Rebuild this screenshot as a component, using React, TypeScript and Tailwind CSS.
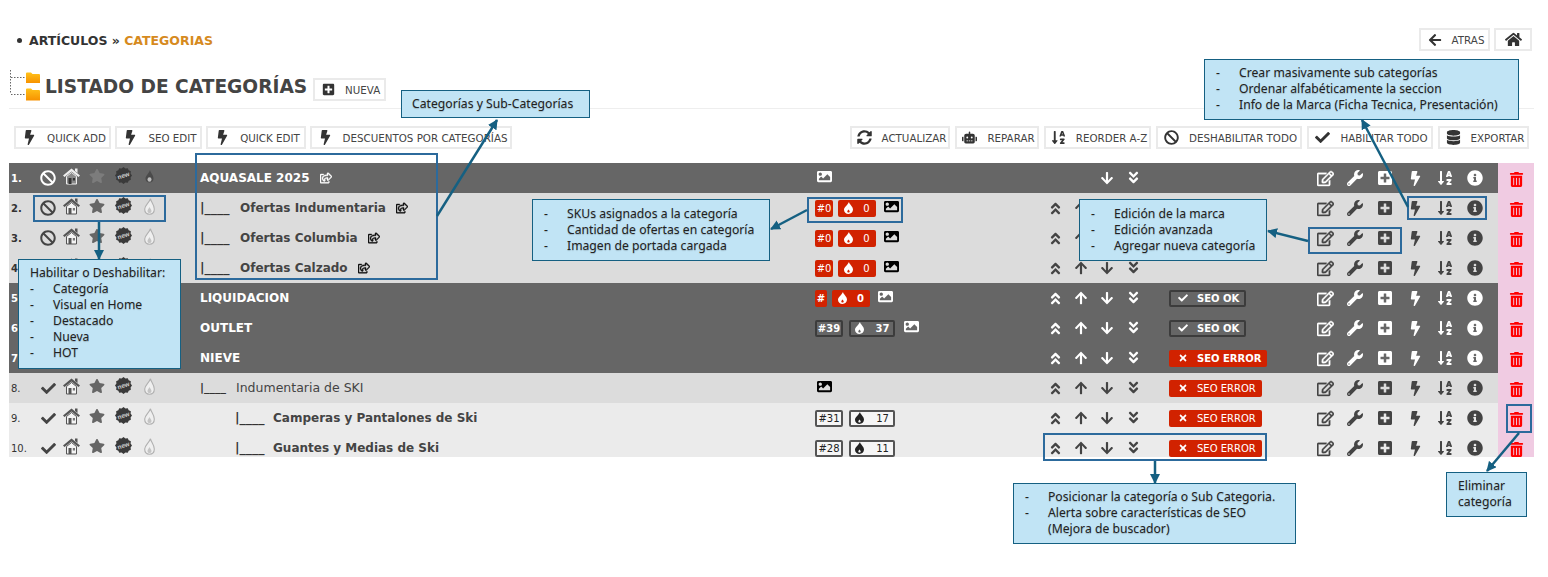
import type { ReactNode } from "react";
import {
    FaAngleDoubleDown, FaAngleDoubleUp, FaArrowDown, FaArrowLeft, FaArrowUp, FaBan, FaBolt, FaCheck,
    FaDatabase, FaHome, FaImage, FaInfoCircle, FaPlusSquare, FaRegEdit, FaRegShareSquare,
    FaRobot, FaSortAlphaDown, FaStar, FaSyncAlt, FaTimes, FaTrashAlt, FaWrench,
} from "react-icons/fa";

type Tone = "dark" | "mid" | "soft";

interface RowData {
    num: string;
    tone: Tone;
    status: "ban" | "check";
    name: string;
    level: 0 | 1 | 2;
    thin?: boolean;
    share?: boolean;
    sku?: string;
    hot?: string;
    skuWarn?: boolean;
    image?: boolean;
    noUp?: boolean;
    seo?: "ok" | "error";
}

const rows: RowData[] = [
    { num: "1.", tone: "dark", status: "ban", name: "AQUASALE 2025", level: 0, share: true, image: true, noUp: true },
    { num: "2.", tone: "mid", status: "ban", name: "Ofertas Indumentaria", level: 1, share: true, sku: "#0", hot: "0", skuWarn: true, image: true },
    { num: "3.", tone: "mid", status: "ban", name: "Ofertas Columbia", level: 1, share: true, sku: "#0", hot: "0", skuWarn: true, image: true },
    { num: "4.", tone: "mid", status: "ban", name: "Ofertas Calzado", level: 1, share: true, sku: "#0", hot: "0", skuWarn: true, image: true },
    { num: "5.", tone: "dark", status: "check", name: "LIQUIDACION", level: 0, sku: "#", hot: "0", skuWarn: true, image: true, seo: "ok" },
    { num: "6.", tone: "dark", status: "check", name: "OUTLET", level: 0, sku: "#39", hot: "37", image: true, seo: "ok" },
    { num: "7.", tone: "dark", status: "check", name: "NIEVE", level: 0, seo: "error" },
    { num: "8.", tone: "mid", status: "check", name: "Indumentaria de SKI", level: 1, thin: true, image: true, seo: "error" },
    { num: "9.", tone: "soft", status: "check", name: "Camperas y Pantalones de Ski", level: 2, sku: "#31", hot: "17", seo: "error" },
    { num: "10.", tone: "soft", status: "check", name: "Guantes y Medias de Ski", level: 2, sku: "#28", hot: "11", seo: "error" },
];

const burst = Array.from({ length: 24 }, (_, i) => {
    const r = i % 2 === 0 ? 8 : 6.9;
    const a = (i * Math.PI) / 12;
    return `${(8 + r * Math.cos(a)).toFixed(2)},${(8 + r * Math.sin(a)).toFixed(2)}`;
}).join(" ");

const HouseIcon = ({ dark }: { dark: boolean }) => {
    const c = dark ? "#ededed" : "#555555";
    return (
        <svg width="17" height="18" viewBox="0 0 17 18">
            <path d="M3.500 9.500 8.500 5.500 13.500 9.500V17h-10z" fill={dark ? "#8a8a8a" : "#f4f4f4"} stroke={c} strokeWidth="1" />
            <path d="M8.500 1.500 17 8.500 15.500 10 8.500 4.500 1.500 10 0 8.500z" fill={c} />
            <path d="M12 1.500h2.500v4.500L12 4z" fill={c} />
            <path d="M5.500 11h3v6h-3z" fill={dark ? "#333333" : "#555555"} />
            <path d="M9.800 11h2.200v2.500H9.800z" fill={dark ? "#333333" : "#777777"} />
        </svg>
    );
};

const NewIcon = () => (
    <svg width="17" height="17" viewBox="0 0 16 16">
        <polygon points={burst} fill="#3a3a3a" />
        <text x="8" y="10" textAnchor="middle" fontSize="6" fontWeight="700" fill="#cfcfcf" fontFamily="Liberation Sans, sans-serif" transform="rotate(-18 8 8)">new</text>
    </svg>
);

const FlameIcon = ({ dark }: { dark: boolean }) =>
    dark ? (
        <svg width="9" height="13" viewBox="0 0 9 13">
            <path d="M5 0C5.500 3 8.500 5 8.500 8.500 8.500 11 6.800 12.500 4.500 12.500 2.200 12.500.5 11 .5 8.500.5 6 3.500 4 5 0z" fill="#4a4a4a" />
            <ellipse cx="4.500" cy="9.500" rx="2" ry="2.300" fill="#bdbdbd" />
        </svg>
    ) : (
        <svg width="11" height="17" viewBox="0 0 11 17">
            <path d="M6.500.8C7 4 10.300 6.800 10.300 11 10.300 14.200 8.200 16.200 5.500 16.200 2.800 16.200.7 14.200.7 11 .7 7.500 5 5 6.500.8z" fill="#efefef" stroke="#b0b0b0" strokeWidth="1.100" />
            <path d="M5.500 9C6 10.500 7.500 11.500 7.500 13 7.500 14.400 6.600 15 5.500 15 4.400 15 3.500 14.400 3.500 13 3.500 11.500 5 10.500 5.500 9z" fill="#c4c4c4" />
        </svg>
    );

// flame inside the count badges, a solid drop with a small hole low down
const BadgeFlame = () => (
    <svg width="9" height="12" viewBox="0 0 9 12" className="shrink-0">
        <path
            fillRule="evenodd"
            fill="currentColor"
            d="M5 0C5.300 2.400 9 4.300 9 7.600 9 10.200 7 12 4.500 12 2 12 0 10.200 0 7.700 0 5.500 3.500 3 5 0zM4.500 7.500C4 8.300 3.300 8.700 3.300 9.500 3.300 10.200 3.800 10.600 4.500 10.600 5.200 10.600 5.700 10.200 5.700 9.500 5.700 8.700 5 8.300 4.500 7.500z"
        />
    </svg>
);

const FolderTree = () => (
    <svg width="31" height="31" viewBox="0 0 31 31" className="mt-[19px] shrink-0">
        <defs>
            <linearGradient id="folder" x1="0" y1="0" x2="0" y2="1">
                <stop offset="0" stopColor="#ffc21a" />
                <stop offset="1" stopColor="#f79200" />
            </linearGradient>
        </defs>
        <path d="M1.500 0v24M2 7.500h15M2 24.500h15" fill="none" stroke="#666666" strokeWidth="1" strokeDasharray="1.500 1.500" />
        <path d="M17 3.500a1 1 0 0 1 1-1h4l1.500 1.500H30a1 1 0 0 1 1 1V13H17z" fill="url(#folder)" />
        <path d="M17 19.500a1 1 0 0 1 1-1h4l1.500 1.500H30a1 1 0 0 1 1 1V30.500H17z" fill="url(#folder)" />
    </svg>
);

const ToolButton = ({ icon, label, width }: { icon: ReactNode; label: string; width: string }) => (
    <div className={`flex h-[23px] items-center justify-center gap-[10px] border-2 border-[#eaeaea] bg-white pl-[3px] text-[10.300px] text-[#444444] ${width}`}>
        {icon}
        <span className="pt-[2px]">{label}</span>
    </div>
);

const Badge = ({ warn, tone, className, children }: { warn?: boolean; tone: Tone; className: string; children: ReactNode }) => {
    const look = warn
        ? "bg-[#d12200] text-white"
        : tone === "dark"
            ? "border-2 border-[#3c3c3c] text-white"
            : "border-2 border-[#555555] bg-[#f6f6f6] text-[#222222]";
    const weight = tone === "dark" ? "font-bold" : "font-normal";
    return <div className={`flex h-[17px] items-center justify-center rounded-[2px] text-[10px] ${weight} ${look} ${className}`}>{children}</div>;
};

const skuWidth = (sku: string) => (sku === "#" ? "w-[12px]" : sku === "#0" ? "w-[18px]" : "w-[28px]");

const Row = ({ row }: { row: RowData }) => {
    const dark = row.tone === "dark";
    const bg = dark ? "bg-[#666666]" : row.tone === "mid" ? "bg-[#dcdcdc]" : "bg-[#ebebeb]";
    const ink = dark ? "text-white" : "text-[#444444]";
    const last = row.num === "10.";
    const isRed = row.sku === "#" || row.sku === "#0";
    const plainNum = row.thin || row.tone === "soft";
    return (
        <div className={`w-[1525px] overflow-hidden ${last ? "h-[24px]" : "h-[30px]"}`}>
            <div className="flex h-[30px]">
                <div className={`flex w-[1489px] items-center ${bg} ${ink}`}>
                    <div className={`w-[26px] pl-[2px] text-[10px] ${plainNum ? "font-normal" : "font-bold"} ${dark ? "text-white" : "text-[#333333]"}`}>{row.num}</div>
                    <div className="flex w-[26px] justify-center">
                        {row.status === "ban" ? <FaBan size={16} /> : <FaCheck size={15} />}
                    </div>
                    <div className="flex w-[20px] justify-center pb-[5px]"><HouseIcon dark={dark} /></div>
                    <div className="flex w-[32px] justify-center pb-[5px]">
                        <FaStar size={16} className={dark ? "text-[#7c7c7c]" : "text-[#666666]"} />
                    </div>
                    <div className="flex w-[20px] justify-center pb-[5px]"><NewIcon /></div>
                    <div className="flex w-[32px] justify-center pb-[4px]"><FlameIcon dark={dark} /></div>

                    <div className={`flex w-[650px] items-center pl-[35px] ${row.thin ? "text-[12.500px] font-normal" : "text-[12px] font-bold"} ${dark ? "text-white" : "text-[#444444]"}`}>
                        {row.level === 1 && <span className={`shrink-0 font-bold text-[#333333] ${row.thin ? "w-[36px] text-[11px]" : "w-[40px] text-[12.500px]"}`}>|____</span>}
                        {row.level === 2 && <span className="ml-[35px] w-[38px] shrink-0 text-[12.500px] font-bold text-[#333333]">|____</span>}
                        <span>{row.name}</span>
                        {row.share && <FaRegShareSquare size={12} strokeWidth={20} className={`ml-[10px] ${dark ? "text-white" : "text-[#111111]"}`} />}
                    </div>

                    <div className="flex w-[227px] items-center">
                        {row.sku && <Badge warn={row.skuWarn} tone={row.tone} className={skuWidth(row.sku)}>{row.sku}</Badge>}
                        {row.hot && (
                            <Badge warn={row.skuWarn} tone={row.tone} className={isRed ? "ml-[5px] w-[38px] gap-[10px]" : "ml-[6px] w-[46px] gap-[12px]"}>
                                <BadgeFlame />
                                <span>{row.hot}</span>
                            </Badge>
                        )}
                        {row.image && (
                            <FaImage size={15} className={`${row.sku ? (row.sku === "#39" ? "ml-[9px]" : "ml-[8px]") : "ml-[2px]"} mb-[3px] ${dark ? "text-white" : "text-black"}`} />
                        )}
                    </div>

                    <div className="flex w-[26px] justify-center">{!row.noUp && <FaAngleDoubleUp size={15} />}</div>
                    <div className="flex w-[26px] justify-center">{!row.noUp && <FaArrowUp size={14} />}</div>
                    <div className="flex w-[26px] justify-center"><FaArrowDown size={14} /></div>
                    <div className="flex w-[27px] justify-center pb-[1px]"><FaAngleDoubleDown size={15} /></div>

                    <div className="flex w-[163px] items-center pl-[22px]">
                        {row.seo === "ok" && (
                            <div className="flex h-[17px] w-[77px] items-center gap-[9px] rounded-[2px] border-2 border-[#3c3c3c] pl-[7px] text-[10px] font-bold text-white">
                                <FaCheck size={10} />SEO OK
                            </div>
                        )}
                        {row.seo === "error" && (
                            <div className={`flex h-[17px] items-center gap-[9px] rounded-[2px] bg-[#d12200] pl-[9px] text-[10px] text-white ${dark ? "w-[98px] font-bold" : "w-[93px]"}`}>
                                <FaTimes size={10} />SEO ERROR
                            </div>
                        )}
                    </div>

                    <div className="flex w-[30px] justify-center"><FaRegEdit size={17} strokeWidth={12} /></div>
                    <div className="flex w-[30px] justify-center"><FaWrench size={16} /></div>
                    <div className="flex w-[30px] justify-center"><FaPlusSquare size={16} /></div>
                    <div className="flex w-[30px] justify-center"><FaBolt size={15} /></div>
                    <div className="flex w-[30px] justify-center"><FaSortAlphaDown size={16} /></div>
                    <div className="flex w-[30px] justify-center"><FaInfoCircle size={16} /></div>
                </div>
                <div className="flex w-[36px] justify-center bg-[#f0cbe2] pt-[9px]">
                    <FaTrashAlt size={15} className="text-[#ff0000]" />
                </div>
            </div>
        </div>
    );
};

const NoteLines = ({ lines }: { lines: string[] }) => (
    <>
        {lines.map((line) => (
            <div key={line} className="flex">
                <span className="w-[23px] shrink-0">-</span>
                <span>{line}</span>
            </div>
        ))}
    </>
);

const noteText = "border border-[#156082] bg-[#c1e4f5] text-[12.200px] leading-[16px] text-[#222222] [font-family:'Noto_Sans',sans-serif] [text-shadow:0_1px_1px_rgba(0,0,0,0.2)]";

const Notes = () => (
    <>
        <div className={`absolute top-[90px] left-[401px] h-[28px] w-[189px] pt-[5px] pl-[10px] ${noteText}`}>Categorías y Sub-Categorías</div>
        <div className={`absolute top-[59px] left-[1204px] h-[61px] w-[315px] pt-[5px] pl-[11px] ${noteText}`}>
            <NoteLines lines={["Crear masivamente sub categorías", "Ordenar alfabéticamente la seccion", "Info de la Marca (Ficha Tecnica, Presentación)"]} />
        </div>
        <div className={`absolute top-[199px] left-[532px] h-[62px] w-[238px] pt-[6px] pl-[11px] ${noteText}`}>
            <NoteLines lines={["SKUs asignados a la categoría", "Cantidad de ofertas en categoría", "Imagen de portada cargada"]} />
        </div>
        <div className={`absolute top-[199px] left-[1079px] h-[62px] w-[188px] pt-[6px] pl-[11px] ${noteText}`}>
            <NoteLines lines={["Edición de la marca", "Edición avanzada", "Agregar nueva categoría"]} />
        </div>
        <div className={`absolute top-[259px] left-[18px] h-[110px] w-[163px] pt-[5px] pl-[11px] ${noteText}`}>
            <div>Habilitar o Deshabilitar:</div>
            <NoteLines lines={["Categoría", "Visual en Home", "Destacado", "Nueva", "HOT"]} />
        </div>
        <div className={`absolute top-[483px] left-[1013px] h-[61px] w-[283px] pt-[5px] pl-[11px] ${noteText}`}>
            <NoteLines lines={["Posicionar la categoría o Sub Categoria."]} />
            <div className="flex">
                <span className="w-[23px] shrink-0">-</span>
                <span>Alerta sobre características de SEO<br />(Mejora de buscador)</span>
            </div>
        </div>
        <div className={`absolute top-[472px] left-[1446px] h-[45px] w-[81px] pt-[5px] pl-[11px] ${noteText}`}>Eliminar categoría</div>

        <div className="absolute top-[195px] left-[33px] h-[27px] w-[133px] border-2 border-[#2c6a9c]" />
        <div className="absolute top-[153px] left-[195px] h-[127px] w-[243px] border-2 border-[#2c6a9c]" />
        <div className="absolute top-[197px] left-[807px] h-[26px] w-[96px] border-2 border-[#2c6a9c]" />
        <div className="absolute top-[196px] left-[1407px] h-[24px] w-[80px] border-2 border-[#2c6a9c]" />
        <div className="absolute top-[227px] left-[1308px] h-[27px] w-[94px] border-2 border-[#2c6a9c]" />
        <div className="absolute top-[433px] left-[1043px] h-[28px] w-[224px] border-2 border-[#2c6a9c]" />
        <div className="absolute top-[404px] left-[1506px] h-[29px] w-[26px] border-2 border-[#2c6a9c]" />

        <svg width="1548" height="577" className="pointer-events-none absolute top-0 left-0">
            <defs>
                <marker id="tip" markerWidth="4" markerHeight="4" refX="3.600" refY="2" orient="auto">
                    <path d="M0 0 4 2 0 4z" fill="#156082" />
                </marker>
            </defs>
            <g stroke="#156082" strokeWidth="2.500" fill="none">
                <line x1="437" y1="216" x2="497" y2="120" markerEnd="url(#tip)" />
                <line x1="99" y1="222" x2="99" y2="259" markerEnd="url(#tip)" />
                <line x1="807" y1="210" x2="771" y2="229" markerEnd="url(#tip)" />
                <line x1="1308" y1="241" x2="1268" y2="231" markerEnd="url(#tip)" />
                <line x1="1408" y1="207" x2="1362" y2="120" markerEnd="url(#tip)" />
                <line x1="1155" y1="461" x2="1155" y2="483" markerEnd="url(#tip)" />
                <line x1="1519" y1="433" x2="1487" y2="471" markerEnd="url(#tip)" />
            </g>
        </svg>
    </>
);

const App = () => {
    return (
        <div className="relative h-[577px] w-[1548px] overflow-hidden bg-white [font-family:'DejaVu_Sans',sans-serif]">
            <div className="flex h-[51px] justify-between pr-[16px]">
                <div className="flex items-center gap-[7px] self-start pt-[33px] pl-[17px] text-[12.500px] leading-[15px] font-bold text-[#333333]">
                    <span className="h-[5px] w-[5px] rounded-full bg-[#333333]" />
                    <span>ARTÍCULOS » <span className="text-[#d68a1e]">CATEGORIAS</span></span>
                </div>
                <div className="flex items-end gap-[4px]">
                    <ToolButton width="w-[71px]" label="ATRAS" icon={<FaArrowLeft size={14} className="text-[#333333]" />} />
                    <div className="flex h-[23px] w-[38px] items-center justify-center border-2 border-[#eaeaea]">
                        <FaHome size={17} className="text-[#333333]" />
                    </div>
                </div>
            </div>

            <div className="ml-[9px] flex h-[58px] w-[1525px] items-start border-b border-[#eeeeee]">
                <FolderTree />
                <h1 className="mt-[22px] ml-[5px] text-[18.600px] leading-[28px] font-bold text-[#444444]">LISTADO DE CATEGORÍAS</h1>
                <div className="mt-[27px] ml-[6px]">
                    <ToolButton width="w-[73px]" label="NUEVA" icon={<FaPlusSquare size={13} className="text-[#333333]" />} />
                </div>
            </div>

            <div className="mt-[17px] flex justify-between pr-[19px] pl-[14px]">
                <div className="flex gap-[4px]">
                    <ToolButton width="w-[97px]" label="QUICK ADD" icon={<FaBolt size={15} className="text-[#333333]" />} />
                    <ToolButton width="w-[87px]" label="SEO EDIT" icon={<FaBolt size={15} className="text-[#333333]" />} />
                    <ToolButton width="w-[100px]" label="QUICK EDIT" icon={<FaBolt size={15} className="text-[#333333]" />} />
                    <ToolButton width="w-[202px]" label="DESCUENTOS POR CATEGORÍAS" icon={<FaBolt size={15} className="text-[#333333]" />} />
                </div>
                <div className="flex gap-[5px]">
                    <ToolButton width="w-[100px]" label="ACTUALIZAR" icon={<FaSyncAlt size={15} className="text-[#333333]" />} />
                    <ToolButton width="w-[84px]" label="REPARAR" icon={<FaRobot size={15} className="text-[#333333]" />} />
                    <ToolButton width="w-[107px]" label="REORDER A-Z" icon={<FaSortAlphaDown size={15} className="text-[#333333]" />} />
                    <ToolButton width="w-[146px]" label="DESHABILITAR TODO" icon={<FaBan size={15} className="text-[#333333]" />} />
                    <ToolButton width="w-[126px]" label="HABILITAR TODO" icon={<FaCheck size={15} className="text-[#333333]" />} />
                    <ToolButton width="w-[91px]" label="EXPORTAR" icon={<FaDatabase size={15} className="text-[#333333]" />} />
                </div>
            </div>

            <div className="mt-[14px] ml-[9px]">
                {rows.map((row) => (
                    <Row key={row.num} row={row} />
                ))}
            </div>

            <Notes />
        </div>
    );
};

export default App;
